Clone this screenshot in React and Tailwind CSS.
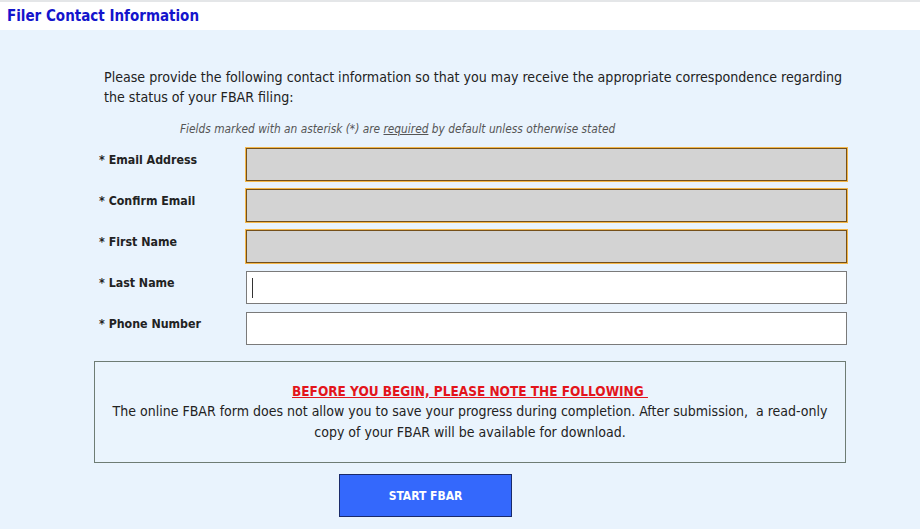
export default function App() {
  const rows = [
    { label: "* Email Address", filled: true },
    { label: "* Confirm Email", filled: true },
    { label: "* First Name", filled: true },
    { label: "* Last Name", filled: false, caret: true },
    { label: "* Phone Number", filled: false },
  ];
  return (
    <div className="w-[920px] h-[529px] overflow-hidden bg-[#e9f3fd] font-['DejaVu_Sans_Condensed','DejaVu_Sans',sans-serif]">
      <div className="h-[30px] bg-white border-t-2 border-[#e4e6e8] flex items-center pl-[7px]">
        <h1 className="text-[15px] font-bold text-[#1414cc] leading-none">Filer Contact Information</h1>
      </div>
      <div className="ml-[94px] w-[753px] pt-[37px]">
        <p className="pl-[10px] text-[14.1px] leading-[20px] text-[#222]">
          Please provide the following contact information so that you may receive the appropriate correspondence regarding the status of your FBAR filing:
        </p>
        <p className="mt-[14px] pl-[86px] text-[11.8px] leading-[16px] italic text-[#555]">
          Fields marked with an asterisk (*) are <span className="underline">required</span> by default unless otherwise stated
        </p>
        <div className="mt-[11px] flex flex-col gap-[8px]">
          {rows.map((r) => (
            <div key={r.label} className="flex items-start">
              <label className="w-[152px] pl-[5px] pt-[4px] text-[12.3px] font-bold text-[#222] leading-[16px]">{r.label}</label>
              {r.filled ? (
                <div className="w-[601px] h-[33px] bg-[#d3d3d3] border border-[#74501a] ring-1 ring-[#f4b74a]" />
              ) : (
                <div className="w-[601px] h-[33px] bg-white border border-[#7a7a7a] flex items-center pl-[5px]">
                  {r.caret && <div className="w-px h-[20px] bg-[#333]" />}
                </div>
              )}
            </div>
          ))}
        </div>
        <div className="mt-[16px] w-[752px] h-[102px] border border-[#6e7c74] bg-[#eaf4fd] flex flex-col items-center pt-[19px] text-center">
          <div className="text-[13.5px] font-bold text-[#e3141b] underline leading-[20px]">BEFORE YOU BEGIN, PLEASE NOTE THE FOLLOWING&nbsp;</div>
          <p className="text-[14px] text-[#222] leading-[21px] px-[10px]">
            The online FBAR form does not allow you to save your progress during completion. After submission,&nbsp; a read-only copy of your FBAR will be available for download.
          </p>
        </div>
        <div className="mt-[11px] pl-[245px]">
          <button className="w-[173px] h-[43px] bg-[#3468fc] border border-[#1a2a6a] text-white text-[12px] font-bold">START FBAR</button>
        </div>
      </div>
    </div>
  );
}
